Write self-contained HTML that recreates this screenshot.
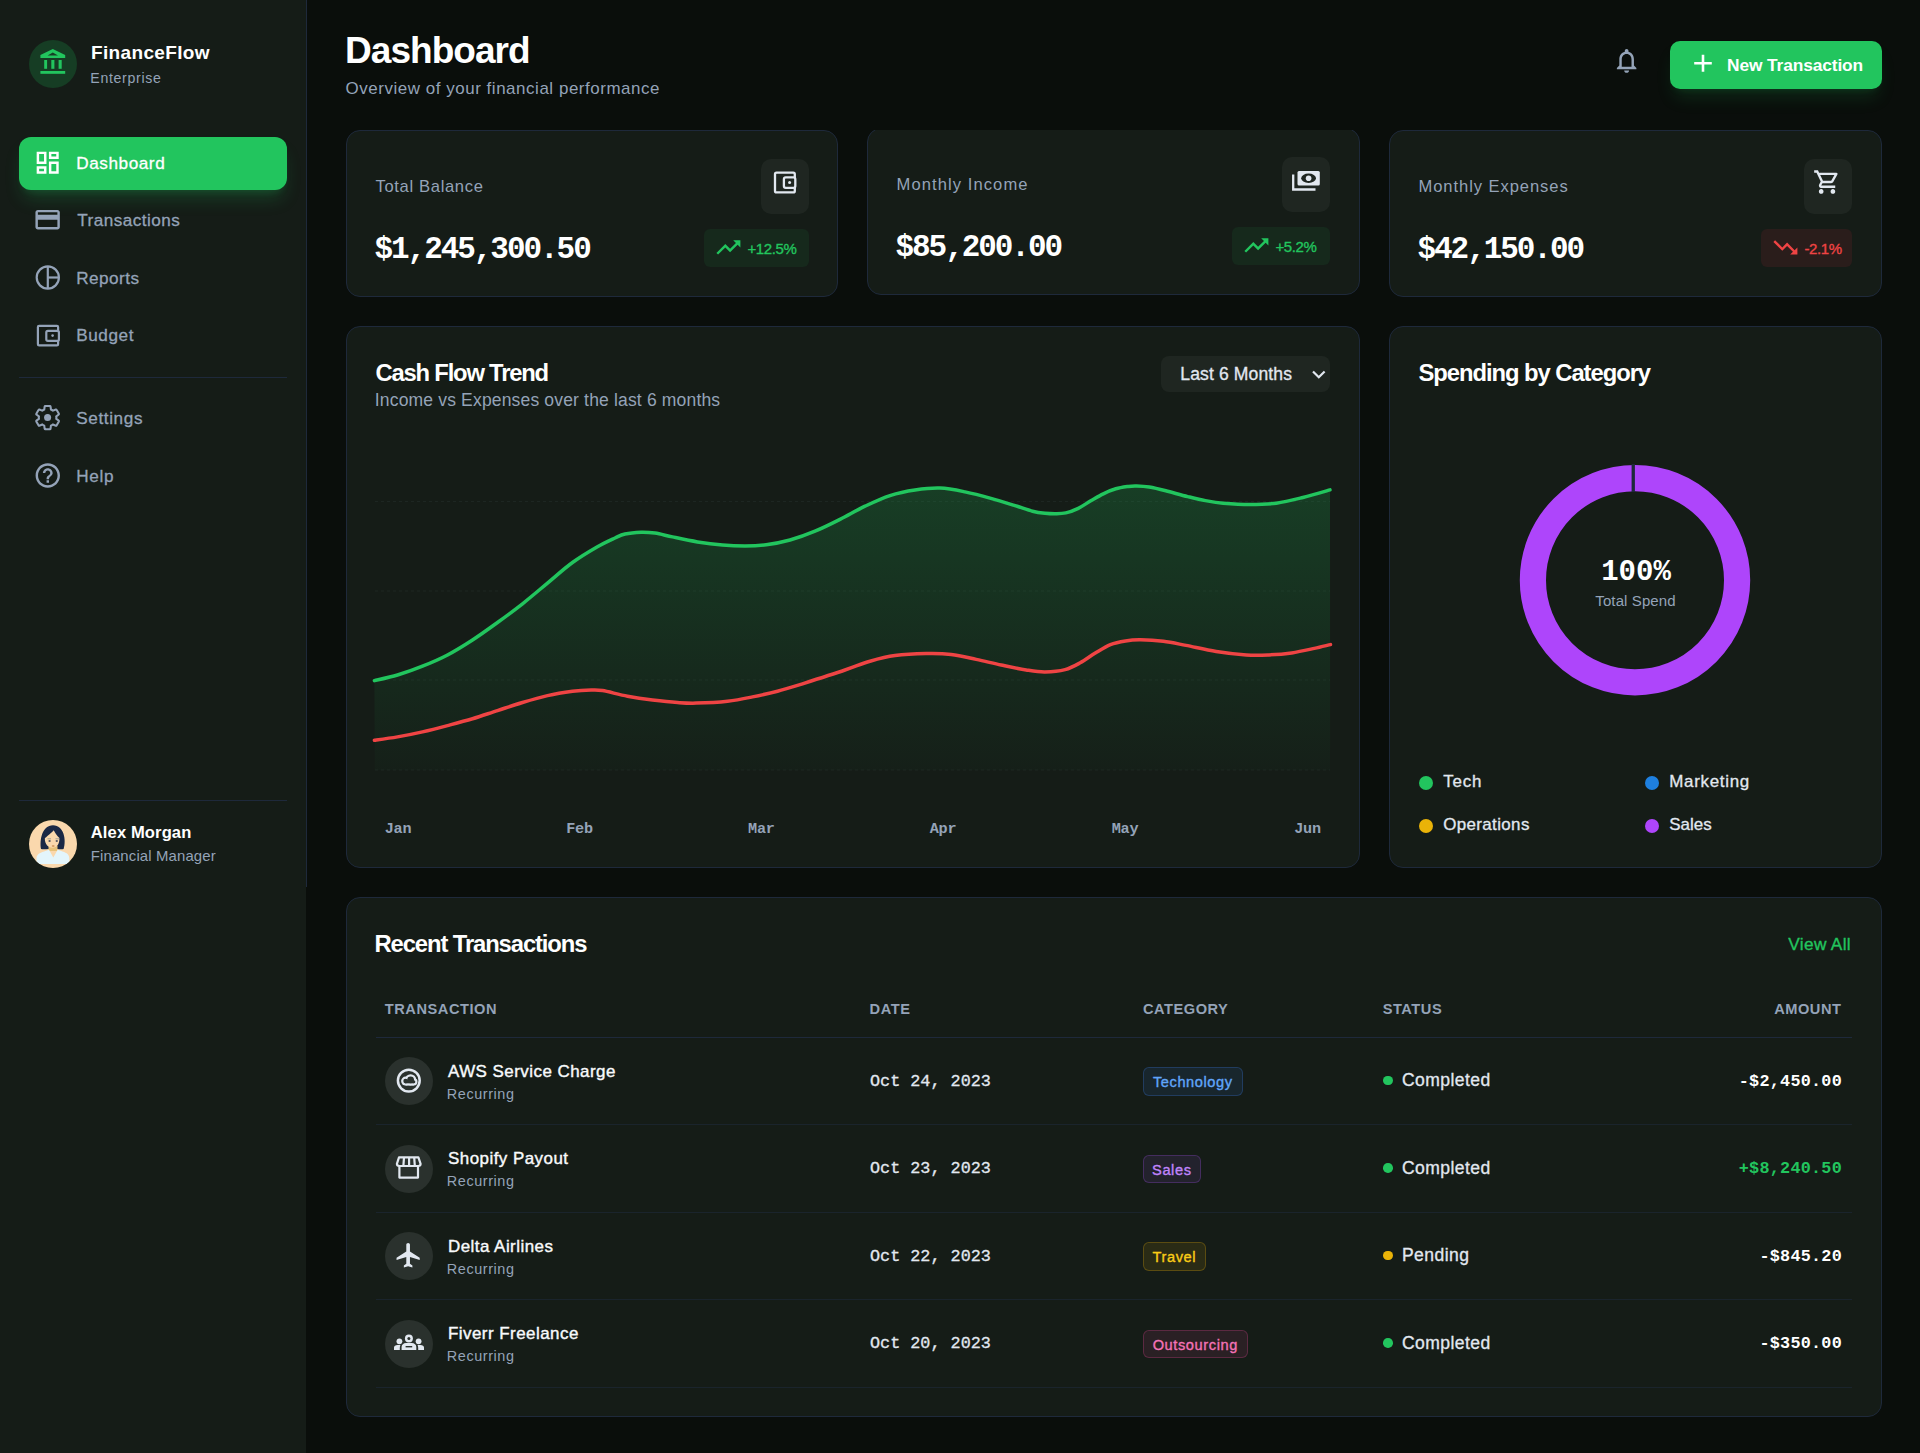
<!DOCTYPE html>
<html><head><meta charset="utf-8"><title>FinanceFlow Dashboard</title>
<style>
html,body{margin:0;padding:0;}
body{width:1920px;height:1453px;position:relative;overflow:hidden;background:#0a0e0b;font-family:'Liberation Sans',sans-serif;}
.t{position:absolute;white-space:nowrap;line-height:1;}
.b{position:absolute;}
</style></head><body>
<div class="b" style="left:0px;top:0px;width:306px;height:1453px;background:#151c17;"></div>
<div class="b" style="left:306px;top:0px;width:1px;height:887px;background:#1e293b;"></div>
<div class="b" style="left:29px;top:40px;width:48px;height:48px;background:#163d24;border-radius:50%;"></div>
<svg class="b" style="left:0;top:0" width="120" height="100" viewBox="0 0 120 100">
<path fill="#22c55e" fill-rule="evenodd" d="M52.8,49 L65.2,55 L65.2,57.9 L40.4,57.9 L40.4,55 Z M52.8,52.6 L47.6,55.4 L58,55.4 Z"/>
<rect x="44.2" y="60" width="2.9" height="8.8" fill="#22c55e"/>
<rect x="51.3" y="60" width="3.1" height="8.8" fill="#22c55e"/>
<rect x="58.6" y="60" width="3.1" height="8.8" fill="#22c55e"/>
<rect x="40.4" y="71" width="24.8" height="2.8" fill="#22c55e"/>
</svg>
<div class="t" style="left:91.00px;top:43.24px;font-family:'Liberation Sans', sans-serif;font-size:19.01px;font-weight:700;color:#ffffff;letter-spacing:0.34375px;">FinanceFlow</div>
<div class="t" style="left:90.30px;top:71.48px;font-family:'Liberation Sans', sans-serif;font-size:14.14px;font-weight:400;color:#94a3b8;letter-spacing:0.68125px;">Enterprise</div>
<div class="b" style="left:19px;top:137px;width:268px;height:53px;background:#22c55e;border-radius:12px;box-shadow:0 12px 18px -4px rgba(34,197,94,0.22),0 5px 8px -5px rgba(34,197,94,0.22);"></div>
<svg class="b" style="left:33.2px;top:148.2px;overflow:visible" width="29.400000000000002" height="29.400000000000002" viewBox="0 0 24 24"><path fill="#ffffff" d="M19 5v2h-4V5h4M9 5v6H5V5h4m10 8v6h-4v-6h4M9 17v2H5v-2h4M21 3h-8v6h8V3zM11 3H3v10h8V3zm10 8h-8v10h8V11zm-10 4H3v6h8v-6z" /></svg>
<svg class="b" style="left:33.2px;top:205.2px;overflow:visible" width="29.28" height="29.28" viewBox="0 0 24 24"><path fill="#94a3b8" d="M20 4H4c-1.11 0-1.99.89-1.99 2L2 18c0 1.11.89 2 2 2h16c1.11 0 2-.89 2-2V6c0-1.11-.89-2-2-2zm0 14H4v-6h16v6zm0-10H4V6h16v2z" /></svg>
<svg class="b" style="left:0;top:0" width="80" height="500" viewBox="0 0 80 500">
<g fill="none" stroke="#94a3b8" stroke-width="2.2">
<circle cx="47.8" cy="277.5" r="11.1"/><line x1="47.8" y1="266.4" x2="47.8" y2="288.6"/><line x1="47.8" y1="277.5" x2="58.9" y2="277.5"/>
<rect x="37.9" y="325.8" width="20.2" height="19.6" rx="1.2"/>
<rect x="46.3" y="330.8" width="12.6" height="10" rx="1.6" fill="#151c17"/>
</g>
<circle cx="52.6" cy="335.6" r="1.3" fill="#94a3b8"/>
<path fill="#94a3b8" transform="translate(33.15,460.85) scale(1.22)" d="M11 18h2v-2h-2v2zm1-16C6.48 2 2 6.48 2 12s4.48 10 10 10 10-4.48 10-10S17.52 2 12 2zm0 18c-4.41 0-8-3.59-8-8s3.59-8 8-8 8 3.59 8 8-3.59 8-8 8zm0-14c-2.21 0-4 1.79-4 4h2c0-1.1.9-2 2-2s2 .9 2 2c0 2-3 1.75-3 5h2c0-2.25 3-2.5 3-5 0-2.21-1.79-4-4-4z"/>
</svg>
<svg class="b" style="left:33.2px;top:402.9px;overflow:visible" width="29.2" height="29.2" viewBox="0 0 24 24"><path fill="none" stroke="#94a3b8" stroke-width="1.7" d="M19.14 12.94c.04-.3.06-.61.06-.94 0-.32-.02-.64-.07-.94l2.03-1.58c.18-.14.23-.41.12-.61l-1.92-3.32c-.12-.22-.37-.29-.59-.22l-2.39.96c-.5-.38-1.03-.7-1.62-.94l-.36-2.54c-.04-.24-.24-.41-.48-.41h-3.84c-.24 0-.43.17-.47.41l-.36 2.54c-.59.24-1.13.57-1.62.94l-2.39-.96c-.22-.08-.47 0-.59.22L2.74 8.87c-.12.21-.08.47.12.61l2.03 1.58c-.05.3-.09.63-.09.94s.02.64.07.94l-2.03 1.58c-.18.14-.23.41-.12.61l1.92 3.32c.12.22.37.29.59.22l2.39-.96c.5.38 1.03.7 1.62.94l.36 2.54c.05.24.24.41.48.41h3.84c.24 0 .44-.17.47-.41l.36-2.54c.59-.24 1.13-.56 1.62-.94l2.39.96c.22.08.47 0 .59-.22l1.92-3.32c.12-.22.07-.47-.12-.61l-2.01-1.58z"/><circle cx="12" cy="12" r="2.9" fill="#94a3b8"/></svg>
<div class="t" style="left:76.20px;top:155.11px;font-family:'Liberation Sans', sans-serif;font-size:17.16px;font-weight:400;color:#ffffff;letter-spacing:0.5700000000000001px;-webkit-text-stroke:0.3px #ffffff;">Dashboard</div>
<div class="t" style="left:77.20px;top:211.91px;font-family:'Liberation Sans', sans-serif;font-size:17.16px;font-weight:400;color:#94a3b8;letter-spacing:0.47000000000000003px;-webkit-text-stroke:0.3px #94a3b8;">Transactions</div>
<div class="t" style="left:76.20px;top:270.11px;font-family:'Liberation Sans', sans-serif;font-size:17.16px;font-weight:400;color:#94a3b8;letter-spacing:0.47000000000000003px;-webkit-text-stroke:0.3px #94a3b8;">Reports</div>
<div class="t" style="left:76.20px;top:327.21px;font-family:'Liberation Sans', sans-serif;font-size:17.16px;font-weight:400;color:#94a3b8;letter-spacing:0.5700000000000001px;-webkit-text-stroke:0.3px #94a3b8;">Budget</div>
<div class="t" style="left:76.20px;top:410.11px;font-family:'Liberation Sans', sans-serif;font-size:17.16px;font-weight:400;color:#94a3b8;letter-spacing:0.6200000000000001px;-webkit-text-stroke:0.3px #94a3b8;">Settings</div>
<div class="t" style="left:76.20px;top:468.11px;font-family:'Liberation Sans', sans-serif;font-size:17.16px;font-weight:400;color:#94a3b8;letter-spacing:0.72px;-webkit-text-stroke:0.3px #94a3b8;">Help</div>
<div class="b" style="left:19px;top:377px;width:268px;height:1px;background:#1e293b;"></div>
<div class="b" style="left:19px;top:800px;width:268px;height:1px;background:#1e293b;"></div>
<svg class="b" style="left:29px;top:820px" width="48" height="48" viewBox="0 0 48 48">
<defs><clipPath id="av"><circle cx="24" cy="24" r="24"/></clipPath></defs>
<g clip-path="url(#av)">
<rect width="48" height="48" fill="#fad8ad"/>
<path d="M12,29 C10.5,20 13,5.2 24,5.2 C35,5.2 37.5,20 34.6,29 C32,29.5 28,29 24,28.5 C20,29 15,29.5 12,29Z" fill="#1b2845"/>
<rect x="19.5" y="26" width="9" height="5" fill="#e8c27a"/>
<path d="M24.8,10.3 C21,14.5 17,17 15.8,18.5 C15.8,24 19,27.8 23.5,27.8 C28,27.8 30.6,24 30.4,18 C28,16 26,13 24.8,10.3Z" fill="#fad8ad"/>
<ellipse cx="20.6" cy="21" rx="1.2" ry="0.8" fill="#1b2845"/><ellipse cx="27.8" cy="21" rx="1.2" ry="0.8" fill="#1b2845"/>
<path d="M18.5,18.8 H22 M26.5,18.8 H30" stroke="#8a8f8f" stroke-width="0.8"/>
<ellipse cx="24.2" cy="26" rx="1.5" ry="0.8" fill="#c98a4a"/>
<path d="M7.5,44 V38.5 C7.5,34.5 10.5,33 15,31.5 L20,29.8 L24.3,37.5 L28.7,29.8 L33.5,31.5 C38,33 40.3,34.5 40.3,38.5 V44 Z" fill="#e3f5fb"/>
</g></svg>
<div class="t" style="left:90.80px;top:825.32px;font-family:'Liberation Sans', sans-serif;font-size:16.57px;font-weight:700;color:#ffffff;letter-spacing:0.11250000000000002px;">Alex Morgan</div>
<div class="t" style="left:90.80px;top:849.02px;font-family:'Liberation Sans', sans-serif;font-size:14.92px;font-weight:400;color:#94a3b8;letter-spacing:0.14125000000000004px;">Financial Manager</div>
<div class="t" style="left:345.00px;top:32.25px;font-family:'Liberation Sans', sans-serif;font-size:37px;font-weight:700;color:#ffffff;letter-spacing:-0.95px;">Dashboard</div>
<div class="t" style="left:345.50px;top:80.88px;font-family:'Liberation Sans', sans-serif;font-size:16.96px;font-weight:400;color:#94a3b8;letter-spacing:0.5475px;">Overview of your financial performance</div>
<svg class="b" style="left:1611.5px;top:46px;overflow:visible" width="29.28" height="29.28" viewBox="0 0 24 24"><path fill="#94a3b8" d="M12 22c1.1 0 2-.9 2-2h-4c0 1.1.89 2 2 2zm6-6v-5c0-3.07-1.64-5.64-4.5-6.32V4c0-.83-.67-1.5-1.5-1.5s-1.5.67-1.5 1.5v.68C7.63 5.36 6 7.92 6 11v5l-2 2v1h16v-1l-2-2zm-2 1H8v-6c0-2.48 1.51-4.5 4-4.5s4 2.02 4 4.5v6z" /></svg>
<div class="b" style="left:1670px;top:41px;width:212px;height:48px;background:#22c55e;border-radius:10px;box-shadow:0 12px 18px -4px rgba(34,197,94,0.15),0 5px 8px -5px rgba(34,197,94,0.15);"></div>
<svg class="b" style="left:1690px;top:51px" width="26" height="26" viewBox="0 0 26 26"><path d="M4.2,12.3 H21.8 M13,3.8 V20.8" stroke="#fff" stroke-width="2.6"/></svg>
<div class="t" style="left:1727.00px;top:56.74px;font-family:'Liberation Sans', sans-serif;font-size:17.36px;font-weight:700;color:#ffffff;letter-spacing:-0.12749999999999995px;">New Transaction</div>
<div class="b" style="left:346px;top:130px;width:492px;height:167px;background:#151c17;border:1px solid #1e293b;border-radius:14px;box-sizing:border-box;"></div>
<div class="b" style="left:860px;top:130px;width:510px;height:180px;overflow:hidden"><div class="b" style="left:7px;top:-2px;width:493px;height:167px;background:#151c17;border:1px solid #1e293b;border-radius:14px;box-sizing:border-box;"></div></div>
<div class="b" style="left:1389px;top:130px;width:493px;height:167px;background:#151c17;border:1px solid #1e293b;border-radius:14px;box-sizing:border-box;"></div>
<div class="t" style="left:375.50px;top:179.12px;font-family:'Liberation Sans', sans-serif;font-size:16.57px;font-weight:400;color:#94a3b8;letter-spacing:0.6625000000000001px;">Total Balance</div>
<div class="t" style="left:374.50px;top:234.34px;font-family:'Liberation Mono', monospace;font-size:31px;font-weight:700;color:#ffffff;letter-spacing:-2.05px;">$1,245,300.50</div>
<div class="b" style="left:761px;top:159px;width:48px;height:55px;background:#1f2621;border-radius:10px;"></div>
<div class="b" style="left:704px;top:229px;width:105px;height:38px;background:#16291c;border-radius:6px;"></div>
<svg class="b" style="left:713.5px;top:232.5px;overflow:visible" width="28.799999999999997" height="28.799999999999997" viewBox="0 0 24 24"><path fill="#22c55e" d="M16 6l2.29 2.29-4.88 4.88-4-4L2 16.59 3.41 18l6-6 4 4 6.3-6.29L22 12V6z" /></svg>
<div class="t" style="left:747.50px;top:240.83px;font-family:'Liberation Sans', sans-serif;font-size:15.02px;font-weight:400;color:#22c55e;letter-spacing:-0.4075px;-webkit-text-stroke:0.35px #22c55e;">+12.5%</div>
<div class="t" style="left:896.50px;top:177.12px;font-family:'Liberation Sans', sans-serif;font-size:16.57px;font-weight:400;color:#94a3b8;letter-spacing:1.0825px;">Monthly Income</div>
<div class="t" style="left:895.50px;top:232.34px;font-family:'Liberation Mono', monospace;font-size:31px;font-weight:700;color:#ffffff;letter-spacing:-2.05px;">$85,200.00</div>
<div class="b" style="left:1282px;top:157px;width:48px;height:55px;background:#1f2621;border-radius:10px;"></div>
<div class="b" style="left:1232px;top:227px;width:98px;height:38px;background:#16291c;border-radius:6px;"></div>
<svg class="b" style="left:1241.5px;top:230.5px;overflow:visible" width="28.799999999999997" height="28.799999999999997" viewBox="0 0 24 24"><path fill="#22c55e" d="M16 6l2.29 2.29-4.88 4.88-4-4L2 16.59 3.41 18l6-6 4 4 6.3-6.29L22 12V6z" /></svg>
<div class="t" style="left:1275.50px;top:238.83px;font-family:'Liberation Sans', sans-serif;font-size:15.02px;font-weight:400;color:#22c55e;letter-spacing:-0.4075px;-webkit-text-stroke:0.35px #22c55e;">+5.2%</div>
<div class="t" style="left:1418.50px;top:179.12px;font-family:'Liberation Sans', sans-serif;font-size:16.57px;font-weight:400;color:#94a3b8;letter-spacing:0.9225px;">Monthly Expenses</div>
<div class="t" style="left:1417.50px;top:234.34px;font-family:'Liberation Mono', monospace;font-size:31px;font-weight:700;color:#ffffff;letter-spacing:-2.05px;">$42,150.00</div>
<div class="b" style="left:1804px;top:159px;width:48px;height:55px;background:#1f2621;border-radius:10px;"></div>
<div class="b" style="left:1761px;top:229px;width:91px;height:38px;background:#2a1d1b;border-radius:6px;"></div>
<svg class="b" style="left:1770.5px;top:232.5px;overflow:visible" width="28.799999999999997" height="28.799999999999997" viewBox="0 0 24 24"><path fill="#ef4444" d="M16 18l2.29-2.29-4.88-4.88-4 4L2 7.41 3.41 6l6 6 4-4 6.3 6.29L22 12v6z" /></svg>
<div class="t" style="left:1804.50px;top:240.83px;font-family:'Liberation Sans', sans-serif;font-size:15.02px;font-weight:400;color:#ef4444;letter-spacing:-0.4075px;-webkit-text-stroke:0.35px #ef4444;">-2.1%</div>
<svg class="b" style="left:760px;top:160px" width="50" height="50" viewBox="760 160 50 50">
<g fill="none" stroke="#e2e8f0" stroke-width="2.3">
<rect x="775" y="172.7" width="19.8" height="19.7" rx="1.5"/>
<rect x="783.9" y="177.4" width="11.4" height="10.4" rx="1.8" fill="#1f2621"/>
</g><circle cx="789.6" cy="182.6" r="1.5" fill="#e2e8f0"/></svg>
<svg class="b" style="left:1285px;top:160px" width="40" height="40" viewBox="1285 160 40 40">
<path fill="none" stroke="#e2e8f0" stroke-width="2.3" d="M1293.2,174.5 V189.5 H1315.5"/>
<rect x="1297.5" y="170.9" width="22.3" height="14.6" rx="1.5" fill="#e2e8f0"/>
<ellipse cx="1308.6" cy="178.2" rx="7.4" ry="4.7" fill="#1f2621"/>
<circle cx="1308.6" cy="178.2" r="2.8" fill="#e2e8f0"/></svg>
<svg class="b" style="left:1812.8px;top:168px;overflow:visible" width="28.08" height="28.08" viewBox="0 0 24 24"><path fill="#e2e8f0" d="M15.55 13c.75 0 1.41-.41 1.75-1.03l3.58-6.49c.37-.66-.11-1.48-.87-1.48H5.21l-.94-2H1v2h2l3.6 7.59-1.35 2.44C4.52 15.37 5.48 17 7 17h12v-2H7l1.1-2h7.45zM6.16 6h12.15l-2.76 5H8.53L6.16 6zM7 18c-1.1 0-1.99.9-1.99 2S5.9 22 7 22s2-.9 2-2-.9-2-2-2zm10 0c-1.1 0-1.99.9-1.99 2s.89 2 1.99 2 2-.9 2-2-.9-2-2-2z" /></svg>
<div class="b" style="left:346px;top:326px;width:1014px;height:542px;background:#151c17;border:1px solid #1e293b;border-radius:14px;box-sizing:border-box;"></div>
<div class="t" style="left:375.50px;top:360.87px;font-family:'Liberation Sans', sans-serif;font-size:23.8px;font-weight:700;color:#ffffff;letter-spacing:-1.2px;">Cash Flow Trend</div>
<div class="t" style="left:374.80px;top:391.98px;font-family:'Liberation Sans', sans-serif;font-size:17.55px;font-weight:400;color:#94a3b8;letter-spacing:0.155px;">Income vs Expenses over the last 6 months</div>
<div class="b" style="left:1161px;top:356px;width:169px;height:36px;background:#1f2621;border-radius:8px;"></div>
<div class="t" style="left:1180.30px;top:366.08px;font-family:'Liberation Sans', sans-serif;font-size:17.55px;font-weight:400;color:#e2e8f0;letter-spacing:0.125px;-webkit-text-stroke:0.3px #e2e8f0;">Last 6 Months</div>
<svg class="b" style="left:1310px;top:366px" width="18" height="16" viewBox="0 0 18 16"><path d="M3,5.5 L8.8,11.2 L14.6,5.5" fill="none" stroke="#e2e8f0" stroke-width="2.2"/></svg>
<svg class="b" style="left:0;top:0" width="1920" height="900" viewBox="0 0 1920 900">
<defs><linearGradient id="gf" x1="0" y1="0" x2="0" y2="1">
<stop offset="0" stop-color="#22c55e" stop-opacity="0.2"/><stop offset="1" stop-color="#22c55e" stop-opacity="0.02"/></linearGradient></defs>
<g stroke="#94a3b8" stroke-opacity="0.07" stroke-width="1" stroke-dasharray="3 3">
<line x1="375" y1="501.5" x2="1330" y2="501.5"/><line x1="375" y1="591" x2="1330" y2="591"/>
<line x1="375" y1="680" x2="1330" y2="680"/><line x1="375" y1="770" x2="1330" y2="770"/></g>
<path d="M374.4,680.6 C378.2,679.7 389.5,677.4 397.5,675.0 C405.5,672.6 414.2,669.6 422.5,666.2 C430.8,662.9 439.2,659.4 447.5,655.0 C455.8,650.6 464.2,645.4 472.5,640.0 C480.8,634.6 489.2,628.5 497.5,622.5 C505.8,616.5 514.2,610.3 522.5,603.8 C530.8,597.2 539.2,590.0 547.5,583.1 C555.8,576.2 564.2,568.5 572.5,562.5 C580.8,556.5 589.9,551.1 597.0,547.0 C604.1,542.9 610.3,540.2 615.0,538.0 C619.7,535.8 620.6,535.0 625.0,534.0 C629.4,533.0 636.2,532.4 641.2,532.2 C646.2,532.1 649.8,532.3 655.0,533.1 C660.2,533.9 665.4,535.4 672.5,536.9 C679.6,538.4 689.2,540.5 697.5,541.9 C705.8,543.2 714.6,544.3 722.5,545.0 C730.4,545.7 737.7,546.0 745.0,546.0 C752.3,546.0 758.8,545.8 766.2,544.8 C773.8,543.8 781.9,542.2 790.0,540.0 C798.1,537.8 806.7,534.7 815.0,531.2 C823.3,527.8 831.7,523.6 840.0,519.4 C848.3,515.2 856.7,510.2 865.0,506.2 C873.3,502.3 881.7,498.3 890.0,495.6 C898.3,492.9 906.7,491.2 915.0,490.0 C923.3,488.8 931.7,487.8 940.0,488.1 C948.3,488.4 956.7,490.2 965.0,491.9 C973.3,493.6 981.7,495.8 990.0,498.1 C998.3,500.4 1007.9,503.4 1015.0,505.6 C1022.1,507.8 1027.5,510.0 1032.5,511.2 C1037.5,512.5 1041.2,512.9 1045.0,513.3 C1048.8,513.7 1051.5,513.8 1055.0,513.8 C1058.5,513.7 1061.9,513.8 1065.8,512.9 C1069.7,512.0 1074.1,510.3 1078.3,508.3 C1082.5,506.3 1086.6,503.2 1090.8,500.8 C1095.0,498.4 1099.1,495.8 1103.3,493.8 C1107.5,491.7 1111.6,490.0 1115.8,488.8 C1120.0,487.5 1124.8,486.9 1128.3,486.4 C1131.8,485.9 1133.2,485.9 1136.7,486.0 C1140.2,486.1 1144.4,486.3 1149.2,487.1 C1154.0,487.9 1159.4,489.2 1165.8,490.8 C1172.2,492.4 1181.1,495.0 1187.7,496.6 C1194.3,498.2 1199.5,499.5 1205.4,500.6 C1211.3,501.7 1215.7,502.6 1223.1,503.2 C1230.5,503.8 1240.8,504.5 1249.7,504.5 C1258.6,504.5 1267.4,504.4 1276.3,503.2 C1285.2,502.0 1294.0,499.7 1302.9,497.5 C1311.9,495.3 1325.5,491.2 1330.0,489.9 L1330.1,770 L374.8,770 Z" fill="url(#gf)"/>
<path d="M374.4,740.2 C378.2,739.7 389.5,738.3 397.5,736.9 C405.5,735.5 414.2,733.8 422.5,731.9 C430.8,730.0 439.2,727.8 447.5,725.6 C455.8,723.4 464.2,721.2 472.5,718.8 C480.8,716.2 489.2,713.3 497.5,710.6 C505.8,707.9 514.2,705.0 522.5,702.5 C530.8,700.0 539.2,697.5 547.5,695.6 C555.8,693.7 565.2,692.2 572.5,691.2 C579.8,690.3 586.2,690.1 591.2,690.0 C596.2,689.9 596.5,689.6 602.5,690.6 C608.5,691.6 619.2,694.7 627.5,696.2 C635.8,697.8 644.2,699.0 652.5,700.0 C660.8,701.0 670.2,702.0 677.5,702.5 C684.8,703.0 687.9,703.3 696.2,703.1 C704.6,702.9 718.1,702.3 727.5,701.2 C736.9,700.2 744.2,698.6 752.5,696.9 C760.8,695.2 769.2,693.4 777.5,691.2 C785.8,689.1 791.2,687.3 802.5,683.8 C813.8,680.2 833.8,673.8 845.0,670.0 C856.2,666.2 861.7,663.6 870.0,661.2 C878.3,658.9 885.6,656.9 895.0,655.6 C904.4,654.3 916.9,653.7 926.2,653.5 C935.6,653.3 942.9,653.4 951.2,654.4 C959.6,655.4 967.9,657.6 976.2,659.4 C984.6,661.2 992.9,663.2 1001.2,665.0 C1009.6,666.8 1019.0,668.9 1026.2,670.0 C1033.5,671.1 1038.5,672.0 1045.0,671.9 C1051.5,671.8 1059.2,671.1 1065.1,669.6 C1071.0,668.1 1075.2,665.6 1080.2,662.8 C1085.2,660.0 1090.3,656.0 1095.3,653.0 C1100.3,650.0 1105.4,646.6 1110.4,644.6 C1115.4,642.6 1120.5,641.7 1125.5,640.9 C1130.5,640.1 1134.3,639.7 1140.6,639.8 C1146.9,639.9 1155.7,640.4 1163.3,641.3 C1170.9,642.2 1177.2,643.7 1186.0,645.4 C1194.8,647.1 1206.1,649.8 1216.2,651.4 C1226.3,653.0 1237.6,654.3 1246.4,654.9 C1255.2,655.5 1261.5,655.2 1269.0,654.9 C1276.5,654.6 1284.1,654.0 1291.7,652.9 C1299.3,651.8 1307.9,649.8 1314.4,648.4 C1320.9,647.0 1327.8,645.2 1330.5,644.6" fill="none" stroke="#ef4444" stroke-width="3.5" stroke-linecap="round"/>
<path d="M374.4,680.6 C378.2,679.7 389.5,677.4 397.5,675.0 C405.5,672.6 414.2,669.6 422.5,666.2 C430.8,662.9 439.2,659.4 447.5,655.0 C455.8,650.6 464.2,645.4 472.5,640.0 C480.8,634.6 489.2,628.5 497.5,622.5 C505.8,616.5 514.2,610.3 522.5,603.8 C530.8,597.2 539.2,590.0 547.5,583.1 C555.8,576.2 564.2,568.5 572.5,562.5 C580.8,556.5 589.9,551.1 597.0,547.0 C604.1,542.9 610.3,540.2 615.0,538.0 C619.7,535.8 620.6,535.0 625.0,534.0 C629.4,533.0 636.2,532.4 641.2,532.2 C646.2,532.1 649.8,532.3 655.0,533.1 C660.2,533.9 665.4,535.4 672.5,536.9 C679.6,538.4 689.2,540.5 697.5,541.9 C705.8,543.2 714.6,544.3 722.5,545.0 C730.4,545.7 737.7,546.0 745.0,546.0 C752.3,546.0 758.8,545.8 766.2,544.8 C773.8,543.8 781.9,542.2 790.0,540.0 C798.1,537.8 806.7,534.7 815.0,531.2 C823.3,527.8 831.7,523.6 840.0,519.4 C848.3,515.2 856.7,510.2 865.0,506.2 C873.3,502.3 881.7,498.3 890.0,495.6 C898.3,492.9 906.7,491.2 915.0,490.0 C923.3,488.8 931.7,487.8 940.0,488.1 C948.3,488.4 956.7,490.2 965.0,491.9 C973.3,493.6 981.7,495.8 990.0,498.1 C998.3,500.4 1007.9,503.4 1015.0,505.6 C1022.1,507.8 1027.5,510.0 1032.5,511.2 C1037.5,512.5 1041.2,512.9 1045.0,513.3 C1048.8,513.7 1051.5,513.8 1055.0,513.8 C1058.5,513.7 1061.9,513.8 1065.8,512.9 C1069.7,512.0 1074.1,510.3 1078.3,508.3 C1082.5,506.3 1086.6,503.2 1090.8,500.8 C1095.0,498.4 1099.1,495.8 1103.3,493.8 C1107.5,491.7 1111.6,490.0 1115.8,488.8 C1120.0,487.5 1124.8,486.9 1128.3,486.4 C1131.8,485.9 1133.2,485.9 1136.7,486.0 C1140.2,486.1 1144.4,486.3 1149.2,487.1 C1154.0,487.9 1159.4,489.2 1165.8,490.8 C1172.2,492.4 1181.1,495.0 1187.7,496.6 C1194.3,498.2 1199.5,499.5 1205.4,500.6 C1211.3,501.7 1215.7,502.6 1223.1,503.2 C1230.5,503.8 1240.8,504.5 1249.7,504.5 C1258.6,504.5 1267.4,504.4 1276.3,503.2 C1285.2,502.0 1294.0,499.7 1302.9,497.5 C1311.9,495.3 1325.5,491.2 1330.0,489.9" fill="none" stroke="#22c55e" stroke-width="3.5" stroke-linecap="round"/>
</svg>
<div class="t" style="left:98.00px;width:600px;text-align:center;top:822.25px;font-family:'Liberation Mono', monospace;font-size:15.2px;font-weight:700;color:#94a3b8;letter-spacing:-0.3px;">Jan</div>
<div class="t" style="left:279.50px;width:600px;text-align:center;top:822.25px;font-family:'Liberation Mono', monospace;font-size:15.2px;font-weight:700;color:#94a3b8;letter-spacing:-0.3px;">Feb</div>
<div class="t" style="left:461.30px;width:600px;text-align:center;top:822.25px;font-family:'Liberation Mono', monospace;font-size:15.2px;font-weight:700;color:#94a3b8;letter-spacing:-0.3px;">Mar</div>
<div class="t" style="left:643.00px;width:600px;text-align:center;top:822.25px;font-family:'Liberation Mono', monospace;font-size:15.2px;font-weight:700;color:#94a3b8;letter-spacing:-0.3px;">Apr</div>
<div class="t" style="left:825.00px;width:600px;text-align:center;top:822.25px;font-family:'Liberation Mono', monospace;font-size:15.2px;font-weight:700;color:#94a3b8;letter-spacing:-0.3px;">May</div>
<div class="t" style="left:1007.50px;width:600px;text-align:center;top:822.25px;font-family:'Liberation Mono', monospace;font-size:15.2px;font-weight:700;color:#94a3b8;letter-spacing:-0.3px;">Jun</div>
<div class="b" style="left:1389px;top:326px;width:493px;height:542px;background:#151c17;border:1px solid #1e293b;border-radius:14px;box-sizing:border-box;"></div>
<div class="t" style="left:1418.50px;top:360.77px;font-family:'Liberation Sans', sans-serif;font-size:23.8px;font-weight:700;color:#ffffff;letter-spacing:-1.05px;">Spending by Category</div>
<svg class="b" style="left:1500px;top:440px" width="270" height="280" viewBox="1500 440 270 280">
<circle cx="1635" cy="580.2" r="102.1" fill="none" stroke="#ae45fb" stroke-width="26.2"/>
<rect x="1631.6" y="464" width="3.3" height="28" fill="#1e293b"/></svg>
<div class="t" style="left:1336.00px;width:600px;text-align:center;top:558.06px;font-family:'Liberation Mono', monospace;font-size:29px;font-weight:700;color:#ffffff;letter-spacing:0px;">100%</div>
<div class="t" style="left:1335.50px;width:600px;text-align:center;top:592.83px;font-family:'Liberation Sans', sans-serif;font-size:15.02px;font-weight:400;color:#94a3b8;letter-spacing:0.0925px;">Total Spend</div>
<div class="b" style="left:1419.0px;top:775.6999999999999px;width:14.4px;height:14.4px;background:#22c55e;border-radius:50%;"></div>
<div class="t" style="left:1443.20px;top:774.38px;font-family:'Liberation Sans', sans-serif;font-size:16.96px;font-weight:400;color:#e2e8f0;letter-spacing:0.8175px;-webkit-text-stroke:0.3px #e2e8f0;">Tech</div>
<div class="b" style="left:1645.0px;top:775.6999999999999px;width:14.4px;height:14.4px;background:#1e80e0;border-radius:50%;"></div>
<div class="t" style="left:1669.20px;top:774.38px;font-family:'Liberation Sans', sans-serif;font-size:16.96px;font-weight:400;color:#e2e8f0;letter-spacing:0.7175px;-webkit-text-stroke:0.3px #e2e8f0;">Marketing</div>
<div class="b" style="left:1419.0px;top:818.8px;width:14.4px;height:14.4px;background:#eab308;border-radius:50%;"></div>
<div class="t" style="left:1443.20px;top:817.48px;font-family:'Liberation Sans', sans-serif;font-size:16.96px;font-weight:400;color:#e2e8f0;letter-spacing:0.3675px;-webkit-text-stroke:0.3px #e2e8f0;">Operations</div>
<div class="b" style="left:1645.0px;top:818.8px;width:14.4px;height:14.4px;background:#ae45fb;border-radius:50%;"></div>
<div class="t" style="left:1669.20px;top:817.48px;font-family:'Liberation Sans', sans-serif;font-size:16.96px;font-weight:400;color:#e2e8f0;letter-spacing:0.017499999999999988px;-webkit-text-stroke:0.3px #e2e8f0;">Sales</div>
<div class="b" style="left:346px;top:897px;width:1536px;height:520px;background:#151c17;border:1px solid #1e293b;border-radius:14px;box-sizing:border-box;"></div>
<div class="t" style="left:374.50px;top:931.77px;font-family:'Liberation Sans', sans-serif;font-size:23.8px;font-weight:700;color:#ffffff;letter-spacing:-1.1px;">Recent Transactions</div>
<div class="t" style="right:69.00px;top:935.63px;font-family:'Liberation Sans', sans-serif;font-size:17.26px;font-weight:400;color:#22c55e;letter-spacing:0.32125000000000004px;-webkit-text-stroke:0.35px #22c55e;">View All</div>
<div class="t" style="left:384.80px;top:1001.97px;font-family:'Liberation Sans', sans-serif;font-size:14.62px;font-weight:700;color:#94a3b8;letter-spacing:0.5375px;">TRANSACTION</div>
<div class="t" style="left:869.60px;top:1001.97px;font-family:'Liberation Sans', sans-serif;font-size:14.62px;font-weight:700;color:#94a3b8;letter-spacing:0.5375px;">DATE</div>
<div class="t" style="left:1142.95px;top:1001.97px;font-family:'Liberation Sans', sans-serif;font-size:14.62px;font-weight:700;color:#94a3b8;letter-spacing:0.5375px;">CATEGORY</div>
<div class="t" style="left:1382.70px;top:1001.97px;font-family:'Liberation Sans', sans-serif;font-size:14.62px;font-weight:700;color:#94a3b8;letter-spacing:0.5375px;">STATUS</div>
<div class="t" style="right:78.50px;top:1001.97px;font-family:'Liberation Sans', sans-serif;font-size:14.62px;font-weight:700;color:#94a3b8;letter-spacing:0.5375px;">AMOUNT</div>
<div class="b" style="left:376px;top:1037px;width:1476px;height:1px;background:#1e293b;"></div>
<div class="b" style="left:385px;top:1057.0px;width:48px;height:48px;background:#2a312d;border-radius:50%;"></div>
<div class="t" style="left:448.00px;top:1063.78px;font-family:'Liberation Sans', sans-serif;font-size:16.96px;font-weight:400;color:#f8fafc;letter-spacing:0.4675px;-webkit-text-stroke:0.4px #f8fafc;">AWS Service Charge</div>
<div class="t" style="left:446.80px;top:1086.53px;font-family:'Liberation Sans', sans-serif;font-size:14.43px;font-weight:400;color:#94a3b8;letter-spacing:0.5850000000000001px;">Recurring</div>
<div class="t" style="left:870.00px;top:1073.78px;font-family:'Liberation Mono', monospace;font-size:16.8px;font-weight:400;color:#e2e8f0;letter-spacing:0px;-webkit-text-stroke:0.3px #e2e8f0;">Oct 24, 2023</div>
<div class="b" style="left:1143px;top:1067.0px;width:99.5px;height:28.5px;background:rgba(59,130,246,0.10);border:1px solid rgba(59,130,246,0.25);border-radius:6px;box-sizing:border-box;"></div>
<div class="t" style="left:892.80px;width:600px;text-align:center;top:1075.37px;font-family:'Liberation Sans', sans-serif;font-size:14.62px;font-weight:400;color:#60a5fa;letter-spacing:0.5875px;-webkit-text-stroke:0.35px #60a5fa;">Technology</div>
<div class="b" style="left:1383.2px;top:1075.8px;width:9.6px;height:9.6px;background:#22c55e;border-radius:50%;"></div>
<div class="t" style="left:1402.00px;top:1072.18px;font-family:'Liberation Sans', sans-serif;font-size:17.55px;font-weight:400;color:#e2e8f0;letter-spacing:0.42500000000000004px;-webkit-text-stroke:0.3px #e2e8f0;">Completed</div>
<div class="t" style="right:78.00px;top:1073.93px;font-family:'Liberation Mono', monospace;font-size:16.8px;font-weight:700;color:#ffffff;letter-spacing:0.25px;">-$2,450.00</div>
<div class="b" style="left:376px;top:1124px;width:1476px;height:1px;background:#1e293b;opacity:0.6;"></div>
<div class="b" style="left:385px;top:1144.5px;width:48px;height:48px;background:#2a312d;border-radius:50%;"></div>
<div class="t" style="left:448.00px;top:1151.28px;font-family:'Liberation Sans', sans-serif;font-size:16.96px;font-weight:400;color:#f8fafc;letter-spacing:0.4675px;-webkit-text-stroke:0.4px #f8fafc;">Shopify Payout</div>
<div class="t" style="left:446.80px;top:1174.03px;font-family:'Liberation Sans', sans-serif;font-size:14.43px;font-weight:400;color:#94a3b8;letter-spacing:0.5850000000000001px;">Recurring</div>
<div class="t" style="left:870.00px;top:1161.28px;font-family:'Liberation Mono', monospace;font-size:16.8px;font-weight:400;color:#e2e8f0;letter-spacing:0px;-webkit-text-stroke:0.3px #e2e8f0;">Oct 23, 2023</div>
<div class="b" style="left:1143px;top:1154.5px;width:57.5px;height:28.5px;background:rgba(168,85,247,0.10);border:1px solid rgba(168,85,247,0.25);border-radius:6px;box-sizing:border-box;"></div>
<div class="t" style="left:871.80px;width:600px;text-align:center;top:1162.87px;font-family:'Liberation Sans', sans-serif;font-size:14.62px;font-weight:400;color:#c084fc;letter-spacing:0.5875px;-webkit-text-stroke:0.35px #c084fc;">Sales</div>
<div class="b" style="left:1383.2px;top:1163.3px;width:9.6px;height:9.6px;background:#22c55e;border-radius:50%;"></div>
<div class="t" style="left:1402.00px;top:1159.68px;font-family:'Liberation Sans', sans-serif;font-size:17.55px;font-weight:400;color:#e2e8f0;letter-spacing:0.42500000000000004px;-webkit-text-stroke:0.3px #e2e8f0;">Completed</div>
<div class="t" style="right:78.00px;top:1161.43px;font-family:'Liberation Mono', monospace;font-size:16.8px;font-weight:700;color:#22c55e;letter-spacing:0.25px;">+$8,240.50</div>
<div class="b" style="left:376px;top:1212px;width:1476px;height:1px;background:#1e293b;opacity:0.6;"></div>
<div class="b" style="left:385px;top:1232.0px;width:48px;height:48px;background:#2a312d;border-radius:50%;"></div>
<div class="t" style="left:448.00px;top:1238.78px;font-family:'Liberation Sans', sans-serif;font-size:16.96px;font-weight:400;color:#f8fafc;letter-spacing:0.4675px;-webkit-text-stroke:0.4px #f8fafc;">Delta Airlines</div>
<div class="t" style="left:446.80px;top:1261.53px;font-family:'Liberation Sans', sans-serif;font-size:14.43px;font-weight:400;color:#94a3b8;letter-spacing:0.5850000000000001px;">Recurring</div>
<div class="t" style="left:870.00px;top:1248.78px;font-family:'Liberation Mono', monospace;font-size:16.8px;font-weight:400;color:#e2e8f0;letter-spacing:0px;-webkit-text-stroke:0.3px #e2e8f0;">Oct 22, 2023</div>
<div class="b" style="left:1143px;top:1242.0px;width:62.5px;height:28.5px;background:rgba(234,179,8,0.10);border:1px solid rgba(234,179,8,0.25);border-radius:6px;box-sizing:border-box;"></div>
<div class="t" style="left:874.30px;width:600px;text-align:center;top:1250.37px;font-family:'Liberation Sans', sans-serif;font-size:14.62px;font-weight:400;color:#facc15;letter-spacing:0.5875px;-webkit-text-stroke:0.35px #facc15;">Travel</div>
<div class="b" style="left:1383.2px;top:1250.8px;width:9.6px;height:9.6px;background:#eab308;border-radius:50%;"></div>
<div class="t" style="left:1402.00px;top:1247.18px;font-family:'Liberation Sans', sans-serif;font-size:17.55px;font-weight:400;color:#e2e8f0;letter-spacing:0.42500000000000004px;-webkit-text-stroke:0.3px #e2e8f0;">Pending</div>
<div class="t" style="right:78.00px;top:1248.93px;font-family:'Liberation Mono', monospace;font-size:16.8px;font-weight:700;color:#ffffff;letter-spacing:0.25px;">-$845.20</div>
<div class="b" style="left:376px;top:1299px;width:1476px;height:1px;background:#1e293b;opacity:0.6;"></div>
<div class="b" style="left:385px;top:1319.5px;width:48px;height:48px;background:#2a312d;border-radius:50%;"></div>
<div class="t" style="left:448.00px;top:1326.28px;font-family:'Liberation Sans', sans-serif;font-size:16.96px;font-weight:400;color:#f8fafc;letter-spacing:0.4675px;-webkit-text-stroke:0.4px #f8fafc;">Fiverr Freelance</div>
<div class="t" style="left:446.80px;top:1349.03px;font-family:'Liberation Sans', sans-serif;font-size:14.43px;font-weight:400;color:#94a3b8;letter-spacing:0.5850000000000001px;">Recurring</div>
<div class="t" style="left:870.00px;top:1336.28px;font-family:'Liberation Mono', monospace;font-size:16.8px;font-weight:400;color:#e2e8f0;letter-spacing:0px;-webkit-text-stroke:0.3px #e2e8f0;">Oct 20, 2023</div>
<div class="b" style="left:1143px;top:1329.5px;width:104.5px;height:28.5px;background:rgba(236,72,153,0.10);border:1px solid rgba(236,72,153,0.25);border-radius:6px;box-sizing:border-box;"></div>
<div class="t" style="left:895.30px;width:600px;text-align:center;top:1337.87px;font-family:'Liberation Sans', sans-serif;font-size:14.62px;font-weight:400;color:#f472b6;letter-spacing:0.5875px;-webkit-text-stroke:0.35px #f472b6;">Outsourcing</div>
<div class="b" style="left:1383.2px;top:1338.3px;width:9.6px;height:9.6px;background:#22c55e;border-radius:50%;"></div>
<div class="t" style="left:1402.00px;top:1334.68px;font-family:'Liberation Sans', sans-serif;font-size:17.55px;font-weight:400;color:#e2e8f0;letter-spacing:0.42500000000000004px;-webkit-text-stroke:0.3px #e2e8f0;">Completed</div>
<div class="t" style="right:78.00px;top:1336.43px;font-family:'Liberation Mono', monospace;font-size:16.8px;font-weight:700;color:#ffffff;letter-spacing:0.25px;">-$350.00</div>
<div class="b" style="left:376px;top:1387px;width:1476px;height:1px;background:#1e293b;opacity:0.6;"></div>
<svg class="b" style="left:380px;top:1050px" width="60" height="320" viewBox="380 1050 60 320">
<circle cx="408.8" cy="1080.6" r="10.9" fill="none" stroke="#e2e8f0" stroke-width="2.5"/>
<g fill="#e2e8f0"><circle cx="405.6" cy="1081.1" r="4.5"/><circle cx="410.6" cy="1079.8" r="5.6"/><circle cx="413.8" cy="1081.7" r="3.7"/><rect x="405.6" y="1080" width="8.2" height="5.6"/></g>
<g fill="#2a312d"><circle cx="405.6" cy="1081.1" r="2.3"/><circle cx="410.6" cy="1079.8" r="3.4"/><circle cx="413.8" cy="1081.7" r="1.5"/><rect x="405.6" y="1080" width="8.2" height="3.3"/></g>
<g fill="none" stroke="#e2e8f0" stroke-width="2.2" stroke-linejoin="round">
<path d="M399,1157.4 H418.4 L420.6,1163.8 C420.6,1165.3 419.5,1166 418.3,1166 H399.3 C398,1166 396.9,1165.3 396.9,1163.8 Z"/>
<path d="M404,1157.6 L403.4,1165.6 M409.1,1157.6 V1165.6 M414.2,1157.6 L414.8,1165.6"/>
<path d="M399.4,1166 V1177.6 H418 V1166"/>
</g>
<path fill="#e2e8f0" transform="translate(394.1,1240.6) scale(1.22)" d="M21 16v-2l-8-5V3.5c0-.83-.67-1.5-1.5-1.5S10 2.67 10 3.5V9l-8 5v2l8-2.5V19l-2 1.5V22l3.5-1 3.5 1v-1.5L13 19v-5.5l8 2.5z"/>
<g fill="#e2e8f0">
<circle cx="399.4" cy="1341.3" r="2.9"/><circle cx="418.6" cy="1341.3" r="2.9"/>
<path d="M394,1350 V1347.6 C394,1346 395.5,1345 397.5,1345 H400.4 C400,1346 399.8,1347 399.8,1348 V1350 Z"/>
<path d="M424,1350 V1347.6 C424,1346 422.5,1345 420.5,1345 H417.6 C418,1346 418.2,1347 418.2,1348 V1350 Z"/>
<circle cx="408.9" cy="1338.6" r="4"/>
<path d="M401.6,1350 V1347 C401.6,1344.8 403.5,1343.1 406,1343.1 H411.8 C414.3,1343.1 416.3,1344.8 416.3,1347 V1350 Z"/>
</g>
<circle cx="408.9" cy="1338.6" r="1.5" fill="#2a312d"/>
<rect x="405.6" y="1346" width="6.6" height="1.4" fill="#2a312d"/>
</svg>
</body></html>
